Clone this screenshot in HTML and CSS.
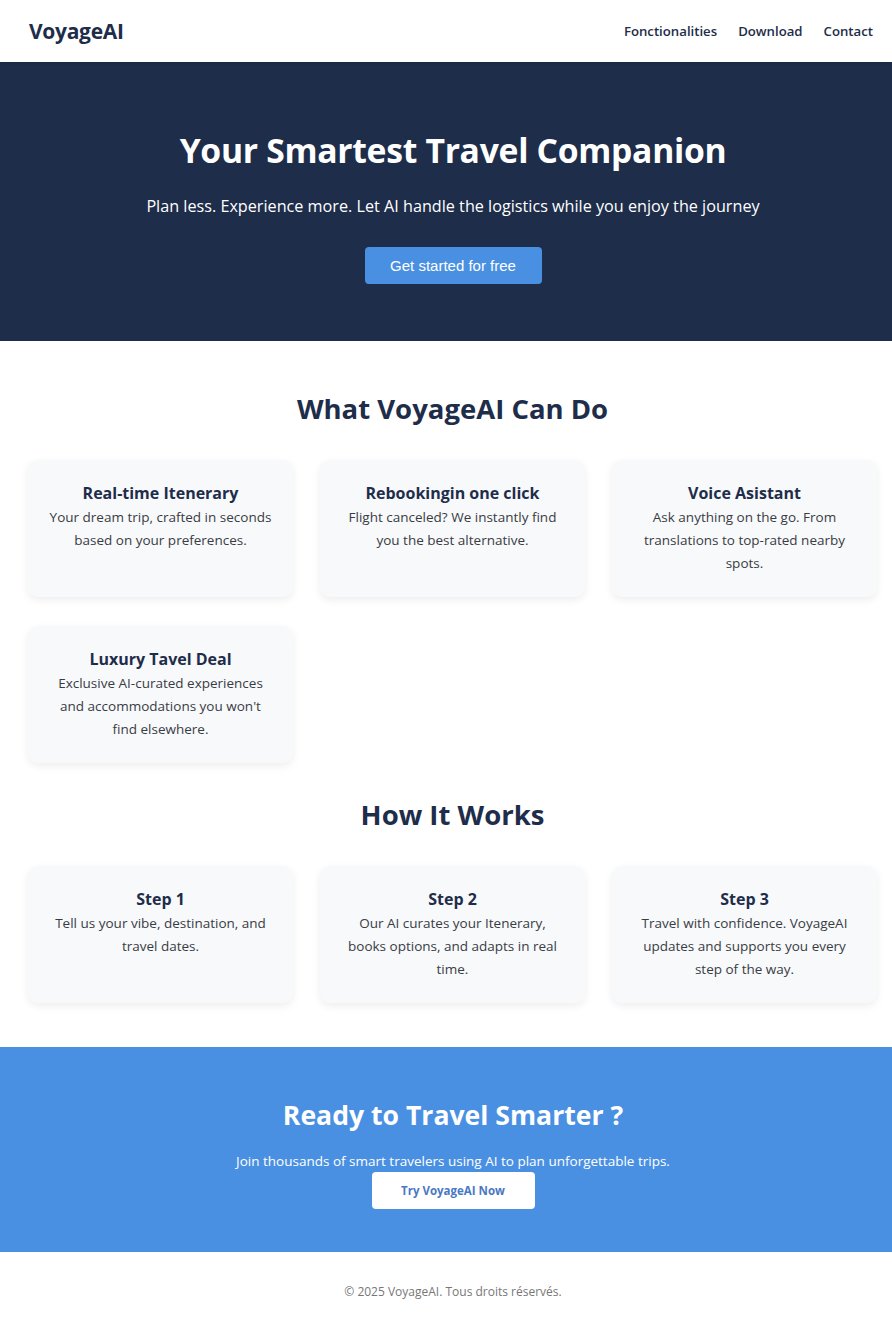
FILE: index.html
```html
<!DOCTYPE html>
<html lang="en">
<head>
<meta charset="utf-8">
<title>VoyageAI</title>
<link rel="stylesheet" href="styles.css">
</head>
<body>
<header class="nav">
  <div class="logo">VoyageAI</div>
  <nav class="links">
    <a href="#">Fonctionalities</a>
    <a href="#">Download</a>
    <a href="#">Contact</a>
  </nav>
</header>

<section class="hero">
  <h1>Your Smartest Travel Companion</h1>
  <p>Plan less. Experience more. Let AI handle the logistics while you enjoy the journey</p>
  <button class="hero-btn">Get started for free</button>
</section>

<section class="block features">
  <h2>What VoyageAI Can Do</h2>
  <div class="grid">
    <div class="card">
      <h3>Real-time Itenerary</h3>
      <p>Your dream trip, crafted in seconds based on your preferences.</p>
    </div>
    <div class="card">
      <h3>Rebookingin one click</h3>
      <p>Flight canceled? We instantly find you the best alternative.</p>
    </div>
    <div class="card">
      <h3>Voice Asistant</h3>
      <p>Ask anything on the go. From translations to top-rated nearby spots.</p>
    </div>
    <div class="card">
      <h3>Luxury Tavel Deal</h3>
      <p>Exclusive AI-curated experiences and accommodations you won't find elsewhere.</p>
    </div>
  </div>
</section>

<section class="block steps">
  <h2>How It Works</h2>
  <div class="grid">
    <div class="card">
      <h3>Step 1</h3>
      <p>Tell us your vibe, destination, and travel dates.</p>
    </div>
    <div class="card">
      <h3>Step 2</h3>
      <p>Our AI curates your Itenerary, books options, and adapts in real time.</p>
    </div>
    <div class="card">
      <h3>Step 3</h3>
      <p>Travel with confidence. VoyageAI updates and supports you every step of the way.</p>
    </div>
  </div>
</section>

<section class="cta">
  <h2>Ready to Travel Smarter ?</h2>
  <p>Join thousands of smart travelers using AI to plan unforgettable trips.</p>
  <button class="cta-btn">Try VoyageAI Now</button>
</section>

<footer class="footer">
  <p>© 2025 VoyageAI. Tous droits réservés.</p>
</footer>
</body>
</html>
```

FILE: styles.css
```css
* { box-sizing: border-box; }

body {
  margin: 0;
  font-family: "Open Sans", "Noto Sans", sans-serif;
  color: #1e2d4a;
  background: #ffffff;
}

.nav {
  height: 62px;
  display: flex;
  align-items: center;
  justify-content: space-between;
  padding: 0 19px 0 29px;
  background: #fff;
  box-shadow: 0 1px 3px rgba(0, 0, 0, 0.15);
  position: relative;
  z-index: 1;
}

.logo {
  font-size: 21px;
  font-weight: 700;
  color: #1e2d4a;
  letter-spacing: -0.3px;
}

.links {
  display: flex;
  gap: 21px;
}

.links a {
  text-decoration: none;
  color: #1e2d4a;
  font-size: 13.2px;
  font-weight: 600;
}

.hero {
  background: #1e2d4a;
  color: #fff;
  height: 279px;
  text-align: center;
  padding: 64px 0 0 14px;
}

.hero h1 {
  margin: 0;
  font-size: 33.7px;
  font-weight: 700;
  line-height: 48px;
  letter-spacing: -0.3px;
}

.hero p {
  margin: 20px 0 0;
  font-size: 16.2px;
  line-height: 24px;
}

.hero-btn {
  margin-top: 29px;
  width: 177px;
  height: 37px;
  border: 0;
  border-radius: 4px;
  background: #4a90e2;
  color: #fff;
  font-family: "Liberation Sans", Arial, sans-serif;
  font-size: 15px;
}

.block {
  padding: 0 15px 0 28px;
  text-align: center;
}

.features { padding-top: 48px; }
.steps { padding-top: 32px; padding-bottom: 44px; }

.block h2 {
  margin: 0;
  font-size: 27.5px;
  font-weight: 700;
  line-height: 40px;
  color: #1e2d4a;
}

.grid {
  margin-top: 31px;
  display: grid;
  grid-template-columns: repeat(3, 1fr);
  gap: 29px 27px;
}

.card {
  background: #f8f9fb;
  border-radius: 10px;
  box-shadow: 0 3px 8px rgba(0, 0, 0, 0.07);
  padding: 21px 20px 21px;
  min-height: 137px;
}

.card h3 {
  margin: 0;
  font-size: 16px;
  font-weight: 700;
  line-height: 25px;
  color: #1e2d4a;
}

.card p {
  margin: 0;
  font-size: 13.5px;
  line-height: 23px;
  color: #383c44;
}

.cta {
  background: #4a90e2;
  color: #fff;
  text-align: center;
  height: 205px;
  padding: 48px 0 0 14px;
}

.cta h2 {
  margin: 0;
  font-size: 26.6px;
  font-weight: 700;
  line-height: 40px;
}

.cta p {
  margin: 16px 0 0;
  font-size: 13.5px;
  line-height: 20px;
}

.cta-btn {
  margin-top: 1px;
  width: 163px;
  height: 37px;
  border: 0;
  border-radius: 4px;
  background: #fff;
  color: #4a78c2;
  font-family: "Open Sans", sans-serif;
  font-size: 11.5px;
  font-weight: 700;
}

.footer {
  text-align: center;
  padding: 31px 0 28px 14px;
}

.footer p {
  margin: 0;
  font-size: 12px;
  line-height: 18px;
  color: #777;
}
```
